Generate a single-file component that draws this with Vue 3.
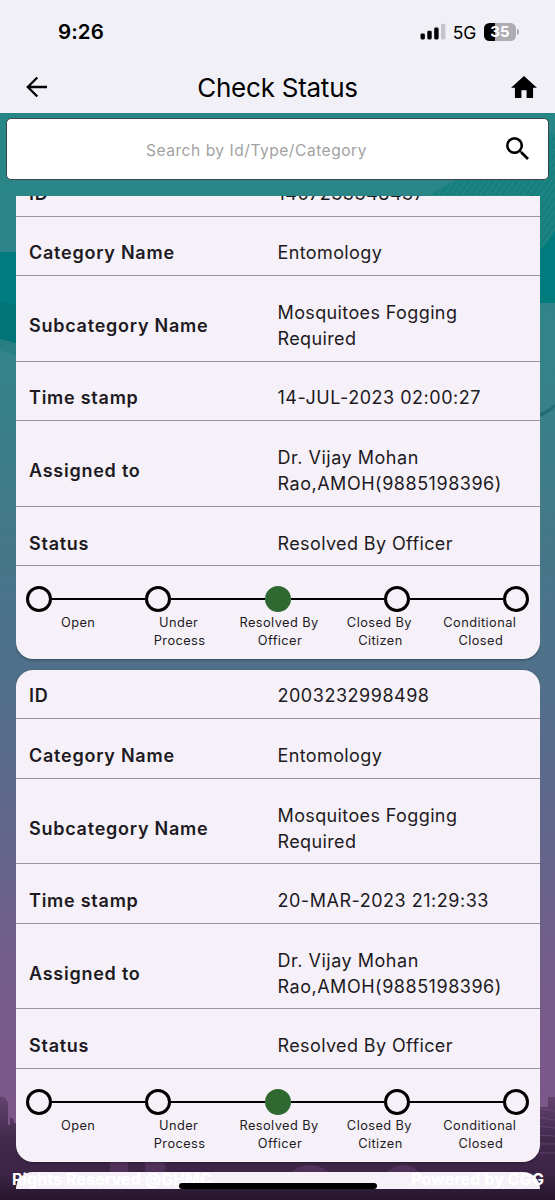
<template>
  <div class="screen">
    <svg class="backdrop" viewBox="0 0 555 1087" preserveAspectRatio="none" aria-hidden="true">
      <defs>
        <linearGradient id="sky" x1="0" y1="0" x2="0" y2="1">
          <stop offset="0" stop-color="#268686" />
          <stop offset="0.22" stop-color="#33848a" />
          <stop offset="0.4" stop-color="#457789" />
          <stop offset="0.55" stop-color="#546e8b" />
          <stop offset="0.68" stop-color="#65658a" />
          <stop offset="0.82" stop-color="#785b89" />
          <stop offset="0.93" stop-color="#7d568a" />
          <stop offset="1" stop-color="#6a4475" />
        </linearGradient>
        <linearGradient id="ground" x1="0" y1="0" x2="0" y2="1">
          <stop offset="0" stop-color="#64446f" />
          <stop offset="0.4" stop-color="#432a4d" />
          <stop offset="0.75" stop-color="#3c2446" />
          <stop offset="1" stop-color="#25152c" />
        </linearGradient>
        <pattern id="hatch" width="5" height="5" patternUnits="userSpaceOnUse" patternTransform="rotate(35)">
          <rect width="1" height="5" fill="#3d9696" opacity="0.4" />
        </pattern>
      </defs>
      <rect width="555" height="1087" fill="url(#sky)" />
      <path d="M0 139H40V205Q20 200 0 194Z" fill="#007b80" />
      <path d="M0 188Q20 195 40 197V245Q20 232 0 226Z" fill="#017478" />
      <path d="M0 226Q20 229 40 243V255Q20 243 0 237Z" fill="#277f83" />
      <path d="M430 82Q490 45 555 20V118Q542 139 526 144V82Z" fill="#16807f" />
      <path d="M430 82Q490 45 555 20V118Q542 139 526 144V82Z" fill="url(#hatch)" />
      <path d="M526 144Q542 139 555 118V190H526Z" fill="#007b7e" />
      <path d="M530 303Q545 300 555 291V294Q547 303 530 307Z" fill="#216c75" />
      <path
        d="M0 984Q5 982 8 990V1012H10V1005H13L14 1010H40V1040H520V994H548V984H555V1087H0Z"
        fill="url(#ground)"
      />
      <path
        d="M538 995L555 998M538 1004L555 1007M538 1013L555 1015M536 1022L555 1023M532 1031L555 1031M530 1040H555"
        fill="none"
        stroke="#76518a"
        stroke-width="1"
        opacity="0.6"
      />
      <g fill="#684075" opacity="0.45">
        <rect x="110" y="1047" width="18" height="14" />
        <rect x="145" y="1048" width="20" height="12" />
        <path d="M290 1060Q310 1044 330 1060ZM385 1060Q405 1044 420 1060Z" />
      </g>
    </svg>

    <header class="top">
      <div class="status-bar">
        <span class="clock">9:26</span>
        <div class="indicators">
          <svg class="signal" viewBox="0 0 26 17">
            <rect x="0.5" y="10.5" width="4.4" height="6" rx="1.4" />
            <rect x="7.3" y="7.7" width="4.4" height="8.8" rx="1.4" />
            <rect x="14.2" y="4.5" width="4.4" height="12" rx="1.4" />
            <rect x="21" y="0.8" width="4.4" height="15.7" rx="1.4" fill="#c5c4ca" />
          </svg>
          <span class="network">5G</span>
          <span class="battery">35</span>
          <span class="battery-tip"></span>
        </div>
      </div>
      <div class="nav">
        <svg class="back" viewBox="0 0 24 24">
          <path d="M22 12H3M12.3 2.5L2.8 12L12.3 21.5" fill="none" stroke="#000" stroke-width="2.3" />
        </svg>
        <h1>Check Status</h1>
        <svg class="home" viewBox="2 3 20 17">
          <path d="M10 20v-6h4v6h5v-8h3L12 3 2 12h3v8z" />
        </svg>
      </div>
    </header>

    <div class="search">
      <span class="placeholder">Search by Id/Type/Category</span>
      <svg class="search-icon" viewBox="3 3 17.5 17.5">
        <path
          d="M15.5 14h-.79l-.28-.27A6.471 6.471 0 0 0 16 9.5 6.5 6.5 0 1 0 9.5 16c1.61 0 3.09-.59 4.23-1.57l.27.28v.79l5 4.99L20.49 19l-4.99-5zm-6 0C7.01 14 5 11.99 5 9.5S7.01 5 9.5 5 14 7.01 14 9.5 11.99 14 9.5 14z"
        />
      </svg>
    </div>

    <main class="list">
      <section v-for="(item, idx) in complaints" :key="idx" class="card">
        <div v-for="field in fields" :key="field.key" class="row">
          <span class="label">{{ field.label }}</span>
          <span class="value" :class="{ numeric: field.numeric }">{{ item[field.key] }}</span>
        </div>
        <div class="progress">
          <div class="track">
            <template v-for="(step, i) in steps" :key="step">
              <span v-if="i > 0" class="line"></span>
              <span class="dot" :class="{ active: step === item.status }"></span>
            </template>
          </div>
          <div class="steps">
            <span v-for="step in steps" :key="step">{{ step }}</span>
          </div>
        </div>
      </section>
      <!-- next card, only its top edge is scrolled into view -->
      <section class="card"></section>
    </main>

    <footer class="credits">
      <span>Rights Reserved @GHMC</span>
      <span>Powered by CGG</span>
    </footer>
    <div class="home-indicator"></div>
  </div>
</template>

<script setup>
const fields = [
  { key: "id", label: "ID", numeric: true },
  { key: "category", label: "Category Name" },
  { key: "subcategory", label: "Subcategory Name" },
  { key: "time", label: "Time stamp", numeric: true },
  { key: "assigned", label: "Assigned to", numeric: true },
  { key: "status", label: "Status" },
];

const steps = [
  "Open",
  "Under Process",
  "Resolved By Officer",
  "Closed By Citizen",
  "Conditional Closed",
];

const base = {
  category: "Entomology",
  subcategory: "Mosquitoes Fogging Required",
  assigned: "Dr. Vijay Mohan Rao,AMOH(9885198396)",
  status: "Resolved By Officer",
};

const complaints = [
  { ...base, id: "1407233348437", time: "14-JUL-2023 02:00:27" },
  { ...base, id: "2003232998498", time: "20-MAR-2023 21:29:33" },
];
</script>

<style>
body {
  margin: 0;
}
</style>

<style scoped>
.screen {
  position: relative;
  display: flex;
  flex-direction: column;
  width: 555px;
  height: 1200px;
  overflow: hidden;
  background: #f1f0f7;
  color: #1d1a22;
  font-family: Inter, "Liberation Sans", sans-serif;
}

.backdrop {
  position: absolute;
  left: 0;
  top: 113px;
  width: 555px;
  height: 1087px;
}

.top {
  height: 113px;
  flex: none;
  color: #000;
}

.status-bar {
  display: flex;
  justify-content: space-between;
  align-items: center;
  height: 63px;
  padding: 0 39px 0 58px;
}

.clock {
  font-size: 20.5px;
  font-weight: 600;
  letter-spacing: 0.1px;
}

.indicators {
  display: flex;
  align-items: center;
}

.signal {
  width: 26px;
  height: 17px;
}

.network {
  margin: 1px 8px 0 7px;
  font-size: 17.5px;
  letter-spacing: -0.2px;
}

.battery {
  width: 32px;
  height: 18px;
  border-radius: 5.5px;
  background: linear-gradient(90deg, #000 35%, #adacb2 35%);
  color: #fff;
  font-size: 15px;
  font-weight: 700;
  line-height: 18px;
  text-align: center;
}

.battery-tip {
  width: 2px;
  height: 6px;
  margin: 0 -3px 0 1px;
  border-radius: 0 2px 2px 0;
  background: #adacb2;
}

.nav {
  display: flex;
  align-items: center;
  justify-content: space-between;
  height: 48px;
  padding: 0 18px 0 25px;
}

.back {
  width: 24px;
  height: 24px;
}

h1 {
  margin: 0 5px 0 0;
  font-size: 26px;
  font-weight: 400;
  letter-spacing: -0.25px;
}

.home {
  width: 26px;
  height: 22px;
}

.search {
  position: relative;
  display: flex;
  align-items: center;
  flex: none;
  box-sizing: border-box;
  height: 62px;
  margin: 5px 6px 0;
  padding-right: 19px;
  border: 1px solid #3d4447;
  border-radius: 5px;
  background: #fff;
}

.placeholder {
  flex: 1;
  padding-top: 2px;
  color: #a2a2a2;
  font-size: 15.6px;
  letter-spacing: 0.5px;
  text-align: center;
}

.search-icon {
  width: 23px;
  height: 23px;
  margin-top: -2px;
}

.list {
  position: relative;
  flex: none;
  height: 993px;
  margin: 16px 15.5px 0;
  overflow: hidden;
}

.card {
  height: 492px;
  margin-bottom: 10.7px;
  border-radius: 17px;
  background: #f6f1f9;
  box-shadow: 0 1px 3px rgba(0, 0, 0, 0.35);
}

/* the list is scrolled a little past the first card's top */
.card:first-child {
  margin-top: -29.1px;
}

.row {
  display: flex;
  align-items: center;
  box-sizing: border-box;
  padding: 23.8px 13.5px 9px;
  border-bottom: 1px solid #9a969e;
  font-size: 18px;
  line-height: 25.85px;
}

.row:first-child {
  padding-top: 13.8px;
}

.label {
  flex: 1;
  font-weight: 600;
  letter-spacing: 0.75px;
}

.value {
  flex: 1;
  letter-spacing: 0.38px;
}

.value.numeric {
  letter-spacing: 0.52px;
}

.progress {
  padding: 20px 10.5px 0;
}

.track {
  display: flex;
  align-items: center;
}

.dot {
  box-sizing: border-box;
  width: 26px;
  height: 26px;
  border: 3px solid #000;
  border-radius: 50%;
}

.dot.active {
  border-color: #2f6831;
  background: #2f6831;
}

.line {
  flex: 1;
  height: 2px;
  background: #000;
}

.steps {
  display: flex;
  margin: 1.4px -2px 0 0;
  padding-left: 3px;
  font-size: 12.8px;
  line-height: 18px;
  letter-spacing: 0.42px;
  text-align: center;
}

.steps span {
  flex: 1 1 0;
  padding: 0 8px;
  text-indent: -2px;
}

.credits {
  position: absolute;
  left: 12px;
  right: 11px;
  bottom: 10px;
  display: flex;
  justify-content: space-between;
  color: #fff;
  font-size: 16px;
  font-weight: 700;
  line-height: 22px;
  letter-spacing: 0.1px;
}

.home-indicator {
  position: absolute;
  left: 179px;
  bottom: 11px;
  width: 198px;
  height: 6px;
  border-radius: 3px;
  background: #000;
}
</style>
